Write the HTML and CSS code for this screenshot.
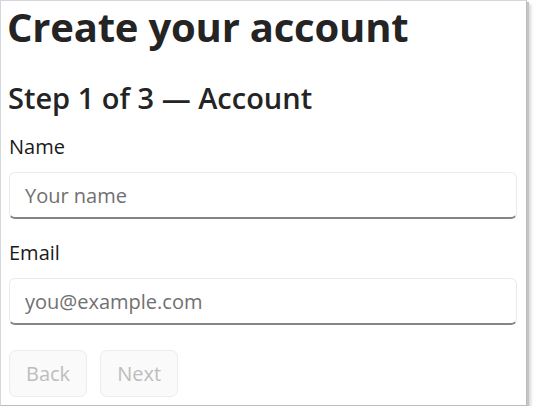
FILE: index.html
```html
<!DOCTYPE html>
<html lang="en">

<head>
    <meta charset="UTF-8">
    <meta name="viewport" content="width=device-width, initial-scale=1.0">
    <title>Create your account</title>
    <link rel="stylesheet" href="styles.css">
</head>

<body>
    <div class="window">
        <form class="signup">
            <h1 class="title">Create your account</h1>
            <h2 class="step">Step 1 of 3 — Account</h2>

            <label class="field-label" for="name">Name</label>
            <input class="field-input" type="text" id="name" placeholder="Your name">

            <label class="field-label" for="email">Email</label>
            <input class="field-input" type="email" id="email" placeholder="you@example.com">

            <div class="actions">
                <button class="btn" type="button" disabled>Back</button>
                <button class="btn" type="button" disabled>Next</button>
            </div>
        </form>
    </div>
</body>

</html>
```

FILE: styles.css
```css
* {
    margin: 0;
    padding: 0;
    box-sizing: border-box;
}

body {
    font-family: 'Open Sans', 'Noto Sans', sans-serif;
    background: #ffffff;
    color: #242424;
}

.window {
    width: 527px;
    height: 406px;
    background: #ffffff;
    border: 1px solid #d3d7df;
    border-right-color: #bcbcbc;
    border-bottom-color: #bcbcbc;
    box-shadow: 2px 2px 0 #c4c4c4, 4px 4px 3px rgba(0, 0, 0, 0.16);
}

.signup {
    display: flex;
    flex-direction: column;
    padding: 0 9px 0 8px;
}

.title {
    margin-left: -2px;
    font-size: 40px;
    font-weight: 700;
    line-height: 52px;
    letter-spacing: -0.2px;
}

.step {
    margin-top: 27px;
    margin-left: -1px;
    font-size: 29px;
    font-weight: 600;
    line-height: 35px;
}

.field-label {
    margin-top: 18px;
    font-size: 20px;
    line-height: 28px;
    color: #1a1a1a;
}

.field-input + .field-label {
    margin-top: 20px;
}

.field-input {
    margin-top: 11px;
    height: 47px;
    width: 100%;
    padding: 0 15px;
    font-family: inherit;
    font-size: 20px;
    color: #242424;
    background: #ffffff;
    border: 1px solid #ebebeb;
    border-bottom: 2px solid #858585;
    border-radius: 6px;
    outline: none;
}

.field-input::placeholder {
    color: #707070;
}

.actions {
    display: flex;
    gap: 13px;
    margin-top: 25px;
}

.btn {
    height: 47px;
    padding: 0 16px;
    font-family: inherit;
    font-size: 20px;
    color: #bdbdbd;
    background: #fafafa;
    border: 1px solid #ececec;
    border-radius: 7px;
}
```
